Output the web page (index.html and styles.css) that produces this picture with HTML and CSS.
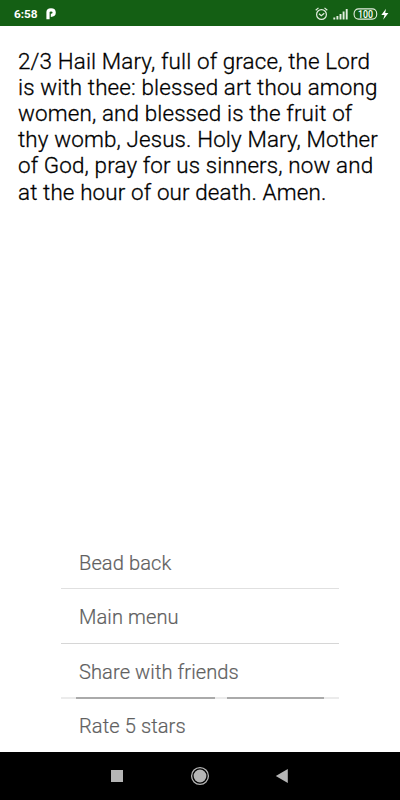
FILE: index.html
```html
<!DOCTYPE html>
<html lang="en">
<head>
<meta charset="utf-8">
<title>Rosary</title>
<link rel="stylesheet" href="styles.css">
</head>
<body>
<header class="status">
  <span class="time">6:58</span>
  <svg class="app" width="10" height="12" viewBox="0 0 10 12"><path d="M2 11.3V4Q2 1.8 5 1.8Q8.2 1.8 8.2 4.5Q8.2 7.3 4.8 7.3" fill="none" stroke="#fff" stroke-width="3.2"/></svg>
  <svg class="icons" width="76" height="16" viewBox="0 0 76 16" fill="none" stroke="#e3eedf">
    <circle cx="6.5" cy="8.5" r="4.9" stroke-width="1.2"/>
    <path d="M.7 4.3 3.5 1.9M9.5 1.9l2.8 2.4M4 7.8l2.3 2 3-2.5" stroke-width="1.2"/>
    <path d="M19.3 13.5v-2M22.4 13.5V10M25.5 13.5V8M28.6 13.5V5.5M31.7 13.5V3" stroke-width="1.9"/>
    <rect x="39.1" y="2.9" width="22.6" height="10.2" rx="4.5" stroke-width="1.1"/>
    <text class="charge" x="50.4" y="11.6" text-anchor="middle" fill="#fff" stroke="none" textLength="15" lengthAdjust="spacingAndGlyphs">100</text>
    <path d="M71 2.8 66.3 9h3.2l-1.3 4.7L73.4 7h-3.2z" fill="#fff" stroke="none"/>
  </svg>
</header>
<main class="page">
  <p class="prayer">2/3 Hail Mary, full of grace, the Lord<br>is with thee: blessed art thou among<br>women, and blessed is the fruit of<br>thy womb, Jesus. Holy Mary, Mother<br>of God, pray for us sinners, now and<br>at the hour of our death. Amen.</p>
  <ul class="menu">
    <li class="soft">Bead back</li>
    <li>Main menu</li>
    <li class="split">Share with friends</li>
    <li>Rate 5 stars</li>
  </ul>
</main>
<nav class="nav">
  <svg width="400" height="48" viewBox="0 0 400 48" fill="#b5b5b5">
    <path d="M111 18h12v12h-12zM287.8 17v14L275.8 24z"/>
    <circle cx="200" cy="24" r="6.4"/>
    <circle cx="200" cy="24" r="8.4" fill="none" stroke="#b5b5b5" stroke-width="1.3"/>
  </svg>
</nav>
</body>
</html>
```
FILE: styles.css
```css
* { box-sizing: border-box; }
body {
  margin: 0;
  height: 800px;
  display: flex;
  flex-direction: column;
  background: #fff;
  font-family: Roboto, sans-serif;
  overflow: hidden;
}
.status {
  height: 26px;
  flex: none;
  display: flex;
  align-items: center;
  padding: 1px 9px 0 14px;
  background: #145f14;
  color: #fff;
}
.time { font-size: 11.8px; font-weight: 700; width: 32px; }
.icons { margin-left: auto; }
.charge { font-size: 10.4px; font-weight: 500; }
.page {
  flex: 1;
  display: flex;
  flex-direction: column;
  justify-content: space-between;
}
.prayer {
  margin: 21.6px 0 0 18px;
  font-size: 22.4px;
  font-weight: 300;
  letter-spacing: 0.14px;
  -webkit-text-stroke: 0.3px #000;
  line-height: 26.2px;
  color: #000;
  white-space: nowrap;
}
.menu {
  list-style: none;
  width: 278px;
  margin: 0 0 0 61px;
  padding: 0;
  font-size: 20.1px;
  font-weight: 300;
  letter-spacing: 0.08px;
  -webkit-text-stroke: 0.2px #606060;
  color: #606060;
}
.menu li {
  height: 54.4px;
  padding-left: 18px;
  line-height: 56px;
  border-bottom: 1px solid #d6d6d6;
}
.menu .soft { border-color: #e0e0e0; }
.menu .split {
  height: 55.4px;
  border-bottom: 2px solid;
  border-image: linear-gradient(90deg, #ebebeb 15px, #aaa 15px 154px, #ebebeb 154px 166px, #aaa 166px 263px, #ebebeb 263px) 0 0 2 0;
}
.menu li:last-child { height: 53px; line-height: 55px; border: 0; }
.nav { height: 48px; flex: none; background: #000; }
.nav svg { display: block; }
```
